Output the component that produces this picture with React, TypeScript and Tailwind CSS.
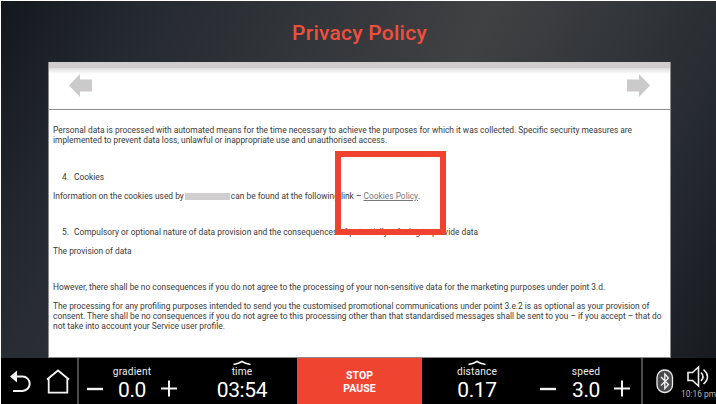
import type { ReactNode } from 'react';

function Line({ children, className = '' }: { children: ReactNode; className?: string }) {
  return <div className={`h-[10px] whitespace-nowrap leading-[10px] ${className}`}>{children}</div>;
}

function Metric({ label, value, chevron = false }: { label: string; value: string; chevron?: boolean }) {
  return (
    <div className="flex w-[54px] flex-col items-center">
      <svg className="h-[6px] w-[18px] shrink-0" viewBox="0 0 18 6" fill="none">
        {chevron && <path d="M.5 4.5 Q6 3.4 9 1.500 Q12 3.4 17.500 4.500" stroke="#ffffff" strokeWidth="1.500" />}
      </svg>
      <span className="text-[10.2px] leading-[12px] tracking-[0.15px] text-[#eeeeee]">{label}</span>
      <span className="whitespace-nowrap text-[21px] leading-[24px] tracking-[-0.35px]">{value}</span>
    </div>
  );
}

function Minus() {
  return (
    <svg className="h-[18px] w-[18px] shrink-0" viewBox="0 0 18 18">
      <path d="M1 10h16" stroke="#f4f4f4" strokeWidth="2.400" />
    </svg>
  );
}

function Plus() {
  return (
    <svg className="h-[18px] w-[18px] shrink-0" viewBox="0 0 18 18">
      <path d="M1 9.500h16M9 1.500v16" stroke="#f4f4f4" strokeWidth="2" />
    </svg>
  );
}

export default function App() {
  return (
    <div className="flex h-[404px] w-[716px] overflow-hidden bg-white pt-px pl-px font-['Roboto','Liberation_Sans',sans-serif]">
      <div className="flex w-[715px] flex-col bg-[linear-gradient(116.6deg,#14181d_0%,#242930_15%,#404143_54%,#262b31_83%,#15181d_100%)]">
        <h1 className="h-[61px] pl-[2px] text-center text-[21px] font-medium leading-[64px] tracking-[0.25px] text-[#ef4f3c]">
          Privacy Policy
        </h1>

        <main className="relative ml-[47px] flex h-[296px] w-[623px] flex-col border-x border-b border-[#8b8b8d] bg-white">
          <div className="h-[6px] shrink-0 bg-[#cfcccd]" />
          <div className="h-[6px] shrink-0 bg-gradient-to-b from-[#dedcdd] to-white" />
          <div className="flex h-[36px] shrink-0 justify-between border-b border-[#8b8b8d] pr-[20px] pl-[20px]">
            <svg className="h-[23px] w-[23px]" viewBox="0 0 23 23">
              <path d="M0 11.500 11 0v5.500h12v12H11V23z" fill="#cbc9ca" />
            </svg>
            <svg className="h-[23px] w-[23px]" viewBox="0 0 23 23">
              <path d="M23 11.500 12 0v5.500H0v12h12V23z" fill="#cbc9ca" />
            </svg>
          </div>

          <div className="flex flex-col pt-[15px] pl-[4px] text-[8.39px] text-[#3a3a3c]">
            <Line>Personal data is processed with automated means for the time necessary to achieve the purposes for which it was collected. Specific security measures are</Line>
            <Line>implemented to prevent data loss, unlawful or inappropriate use and unauthorised access.</Line>
            <Line className="mt-[27px] flex pl-[9px]">
              <span className="w-[12px]">4.</span>Cookies
            </Line>
            <Line className="mt-[9px] flex items-center">
              <span>Information on the cookies used by</span>
              <span className="mx-[1px] h-[7px] w-[45px] bg-[#d0cecf]" />
              <span>can be found at the following link –&nbsp;</span>
              <span className="text-[#77777a] underline underline-offset-1">Cookies Policy</span>.
            </Line>
            <Line className="mt-[26px] flex pl-[9px]">
              <span className="w-[12px]">5.</span>Compulsory or optional nature of data provision and the consequences of potentially refusing to provide data
            </Line>
            <Line className="mt-[9px]">The provision of data</Line>
            <Line className="mt-[26px]">However, there shall be no consequences if you do not agree to the processing of your non-sensitive data for the marketing purposes under point 3.d.</Line>
            <Line className="mt-[9px]">The processing for any profiling purposes intended to send you the customised promotional communications under point 3.e.2 is as optional as your provision of</Line>
            <Line>consent. There shall be no consequences if you do not agree to this processing other than that standardised messages shall be sent to you – if you accept – that do</Line>
            <Line>not take into account your Service user profile.</Line>
          </div>

          <div className="absolute top-[89px] left-[286px] h-[84px] w-[111px] border-[6px] border-[#ef432f]" />
        </main>

        <footer className="flex h-[46px] shrink-0 bg-black text-white">
          <div className="flex w-[78px] shrink-0 border-r-2 border-[#4b4b4d]">
            <svg className="h-[46px] w-[76px]" viewBox="0 0 76 46" fill="none" stroke="#f4f4f4">
              <path d="M12 18.500h9.500a7.200 7.200 0 0 1 0 14.400h-9.500" strokeWidth="2" />
              <path d="m9 18.500 7-6v12z" fill="#f4f4f4" stroke="none" />
              <path d="M46 21.500 57 12.500l11 9M47.700 20.500v14.200h18.600V20.500" strokeWidth="1.800" />
            </svg>
          </div>
          <div className="flex w-[218px] shrink-0 pt-[2px]">
            <div className="flex gap-px pl-[7px]">
              <div className="pt-[19px]"><Minus /></div>
              <Metric label="gradient" value="0.0" />
              <div className="w-[18px] pt-[19px]"><Plus /></div>
            </div>
            <div className="ml-[37px]"><Metric label="time" value="03:54" chevron /></div>
          </div>
          <button className="flex w-[125px] shrink-0 flex-col items-center bg-[#ef4530] pt-[12px] text-[10.500px] font-bold leading-[12.500px] tracking-[0.1px]">
            <span>STOP</span>
            <span>PAUSE</span>
          </button>
          <div className="flex w-[219px] shrink-0 pt-[2px] pl-[28px]">
            <Metric label="distance" value="0.17" chevron />
            <div className="ml-[35px] pt-[19px]"><Minus /></div>
            <div className="ml-[2px]"><Metric label="speed" value="3.0" /></div>
            <div className="pt-[19px]"><Plus /></div>
          </div>
          <div className="flex grow border-l-2 border-[#4b4b4d] pl-[12.5px]">
            <svg className="mt-[11px] h-[25px] w-[18px] shrink-0" viewBox="0 0 18 25" fill="none" stroke="#eeeeee">
              <rect x="1" y="1" width="15.500" height="22.500" rx="7.500" fill="#4a4a4c" strokeWidth="1.300" />
              <path d="m5 8 7.500 7.500-3.700 4V5l3.700 4L5 16.500" strokeWidth="1.400" />
            </svg>
            <div className="ml-[7.5px] flex flex-col">
              <svg className="mt-[7px] ml-[6px] h-[23px] w-[23px]" viewBox="0 0 23 23" fill="none" stroke="#eeeeee" strokeWidth="1.600">
                <path d="M1 7.500h4.500L11.500 2v19l-6-5.500H1z" />
                <path d="M14 7.500q4 4 0 8.500M16.500 4.500q8 7 0 14.500" />
              </svg>
              <span className="whitespace-nowrap text-[8.400px] leading-[13px] text-[#b5b5b7]">10:16 pm</span>
            </div>
          </div>
        </footer>
      </div>
    </div>
  );
}
